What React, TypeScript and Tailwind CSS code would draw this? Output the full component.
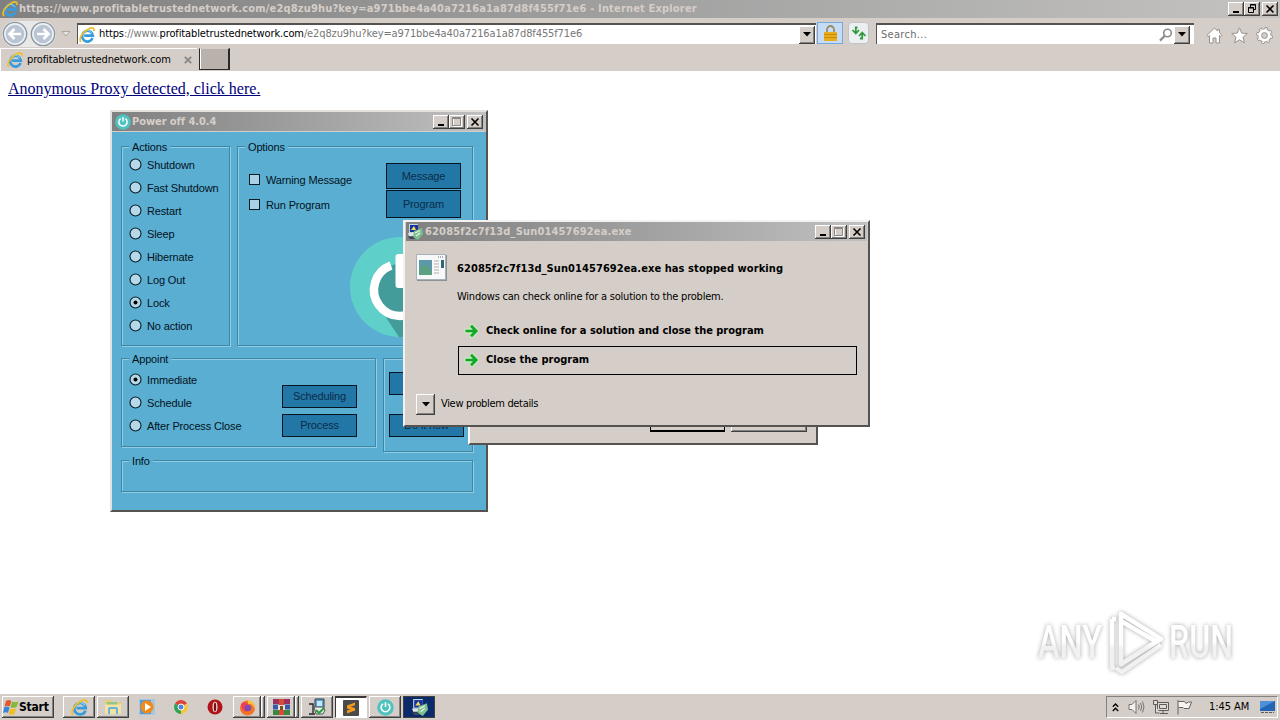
import type { ReactNode } from 'react';
import { clsx } from 'clsx';

const tahoma = "font-['DejaVu_Sans_Condensed','DejaVu_Sans',sans-serif] [font-stretch:condensed]";
const sans = "font-['Liberation_Sans',Arial,sans-serif]";
const raised =
  'bg-[#d5cec8] shadow-[inset_-1px_-1px_0_#404040,inset_1px_1px_0_#fff,inset_-2px_-2px_0_#848280]';

const actions = ['Shutdown', 'Fast Shutdown', 'Restart', 'Sleep', 'Hibernate', 'Log Out', 'Lock', 'No action'];
const appointments = ['Immediate', 'Schedule', 'After Process Close'];

/* ---------- icons ---------- */

function IeIcon({ size = 16 }: { size?: number }) {
  return (
    <svg width={size} height={size} viewBox="0 0 16 16" className="shrink-0">
      <path d="M13.6 11A5.4 5.4 0 1 1 13.9 8.600H5.2" fill="none" stroke="#3a9bdc" strokeWidth="2.6" />
      <path d="M13 6.2A5 5 0 0 0 4 6.2" fill="none" stroke="#8fd3f4" strokeWidth="1" />
      <path d="M2 15C-1 12 3.600 4.800 9.4 2c3.800-1.900 6.300-1.300 5.300 2" fill="none" stroke="#edc02a" strokeWidth="1.7" />
    </svg>
  );
}

function PowerIcon({ size = 16 }: { size?: number }) {
  return (
    <svg width={size} height={size} viewBox="0 0 16 16" className="shrink-0">
      <circle cx="8" cy="8" r="7.8" fill="#4fc3bf" />
      <path d="M5.6 4.6a4.1 4.1 0 1 0 4.8 0M8 3v4.6" fill="none" stroke="#fff" strokeWidth="1.5" />
    </svg>
  );
}

function SetupIcon({ size = 16 }: { size?: number }) {
  return (
    <svg width={size} height={size} viewBox="0 0 16 16" className="shrink-0">
      <path d="M2 0h9v9H2z" fill="#c4d2de" />
      <path d="M3 1h8v7H3z" fill="#1632a0" />
      <path d="M4 6l3-4 2 4z" fill="#f2e14c" />
      <path d="M1 9h8l-2 3H2z" fill="#e4e4e4" />
      <path d="M7 7l8-3 1 6-5 6-5-3z" fill="#7cc08d" />
      <path d="M8 9l5-2.500M9 12l4-3" stroke="#e4f3e6" strokeWidth="1.2" />
      <path d="M1 12.500h5l2 2.500H3z" fill="#394a58" />
    </svg>
  );
}

function NavArrow({ back }: { back?: boolean }) {
  return (
    <svg width="26" height="26" viewBox="0 0 26 26" className="shrink-0">
      <circle cx="13" cy="13" r="11.7" fill="#cbd5df" stroke="#8e969e" strokeWidth="1.3" />
      <circle cx="13" cy="13" r="10" fill="#b9c5d2" stroke="#eef3f8" strokeWidth="1.4" />
      <path
        d={back ? 'M19 13H8M12.5 8l-5 5 5 5' : 'M7 13h11M13.5 8l5 5-5 5'}
        fill="none"
        stroke="#fff"
        strokeWidth="2.7"
      />
    </svg>
  );
}

function GreenArrow() {
  return (
    <svg width="16" height="16" viewBox="0 0 16 16" className="shrink-0">
      <path d="M.5 5.500H6V1h3l6 7-6 7H6v-4.500H.5z" fill="#c3ecbf" />
      <path d="M1.500 8h10M7 2.800L12.200 8 7 13.200" fill="none" stroke="#12a826" strokeWidth="2.700" />
    </svg>
  );
}

function DownButton({ className }: { className: string }) {
  return (
    <span className={clsx('flex shrink-0 items-center justify-center', raised, className)}>
      <svg width="8" height="5" viewBox="0 0 8 5">
        <path d="M0 0h8L4 4.6z" fill="#000" />
      </svg>
    </span>
  );
}

function WindowButtons({ restore }: { restore?: boolean }) {
  const box = clsx('flex h-[14px] w-4 items-center justify-center', raised);
  return (
    <div className="flex shrink-0">
      <span className={box}>
        <svg width="12" height="10" viewBox="0 0 12 10">
          <path d="M3 7h6v2H3z" />
        </svg>
      </span>
      <span className={box}>
        {restore ? (
          <svg width="12" height="10" viewBox="0 0 12 10" fill="none" stroke="#000">
            <path d="M4.5 4V.5h5v5H8M4 1h6M2.5 3.5h5v5h-5zM2 4h6" />
          </svg>
        ) : (
          <svg width="12" height="10" viewBox="0 0 12 10" fill="none">
            <path d="M2.5 1.5h8v8h-8z" stroke="#fff" />
            <path d="M1.5.5h8v8h-8zM1 1.5h9" stroke="#8b8782" />
          </svg>
        )}
      </span>
      <span className={clsx('ml-[2px]', box)}>
        <svg width="12" height="10" viewBox="0 0 12 10">
          <path d="M2.5 1.5l7 7M9.5 1.5l-7 7" stroke="#000" strokeWidth="1.6" />
        </svg>
      </span>
    </div>
  );
}

/* ---------- browser ---------- */

function Browser() {
  return (
    <div className="bg-[#d5cec8]">
      <div className="flex h-[18px] items-center bg-linear-to-r from-[#808080] to-[#c4c3c2] pr-[2px] pl-[2px]">
        <IeIcon />
        <span className={clsx('ml-px pt-px text-[11px] font-bold tracking-[0.17px] whitespace-nowrap text-[#d5cec8]', tahoma)}>
          https://www.profitabletrustednetwork.com/e2q8zu9hu?key=a971bbe4a40a7216a1a87d8f455f71e6 - Internet Explorer
        </span>
        <div className="ml-auto">
          <WindowButtons restore />
        </div>
      </div>

      <div className="flex h-[30px] items-start pt-1">
        <div className="-mt-px ml-[2px] flex h-[26px] gap-[2px] rounded-full bg-[#e8e8e9]">
          <NavArrow back />
          <NavArrow />
        </div>
        <svg width="10" height="6" viewBox="0 0 10 6" className="mt-[9px] ml-[5px] shrink-0">
          <path d="M1 .5h8l-4 4.5z" fill="#e7e3df" stroke="#aba6a1" />
        </svg>
        <div className="mt-px ml-[6px] flex h-[21px] w-[739px] items-center border-t-2 border-l border-t-[#55524f] border-l-[#55524f] bg-white pr-[1px] pl-px">
          <IeIcon />
          <span className={clsx('ml-1 text-[11px] tracking-[-0.115px] whitespace-nowrap text-[#777]', tahoma)}>
            <span className="text-black">https</span>://www.
            <span className="text-black">profitabletrustednetwork.com</span>
            /e2q8zu9hu?key=a971bbe4a40a7216a1a87d8f455f71e6
          </span>
          <DownButton className="ml-auto h-[18px] w-4" />
        </div>
        <div className="ml-px flex h-[22px] w-[26px] items-center justify-center border border-[#79a9dc] bg-[#c5dcf6]">
          <svg width="15" height="16" viewBox="0 0 15 16">
            <path d="M4 8V4.5a3.5 3.5 0 0 1 7 0V8" fill="none" stroke="#9b8a5e" strokeWidth="1.8" />
            <path d="M1 7h13v9H1z" fill="#e9ac1d" />
            <path d="M1 9.5h13M1 12.5h13" stroke="#c98806" />
          </svg>
        </div>
        <div className="ml-[5px] flex h-[22px] w-[21px] items-center justify-center rounded-sm border border-[#c0c4c8] bg-[#eceff1]">
          <svg width="16" height="14" viewBox="0 0 16 14" className="shrink-0" fill="none" stroke="#2f9a3c" strokeWidth="1.800">
            <path d="M6.500 1.500H4.800v5.500M1.500 4L4.800 7.500 8 4" />
            <path d="M9 12.500h2.200V7M8 10l3.200-3.500L14.500 10" />
          </svg>
        </div>
        <div className="mt-px ml-[7px] flex h-[21px] w-[318px] items-center border-t-2 border-l border-t-[#55524f] border-l-[#55524f] bg-white pr-1 pl-1">
          <span className={clsx('pt-px text-[11px] tracking-[0.3px] text-[#6d6d6d]', tahoma)}>Search...</span>
          <svg width="14" height="14" viewBox="0 0 14 14" className="ml-auto" fill="none" stroke="#8b8b8b">
            <circle cx="8.5" cy="5" r="3.8" strokeWidth="1.6" />
            <path d="M5.8 7.8L1 12.6" strokeWidth="2.2" />
          </svg>
          <DownButton className="ml-px h-[18px] w-4" />
        </div>
        <div className="mt-[5px] ml-[12px] flex gap-2 [&>svg]:shrink-0">
          <svg width="17" height="17" viewBox="0 0 17 17" fill="#fff" stroke="#969290">
            <path d="M8.5 1L1 8.3l1.2 1.3L3.5 8.5V16H7v-5h3v5h3.5V8.5l1.3 1.1L16 8.3l-2.5-2.4V2.5h-2V4z" />
          </svg>
          <svg width="17" height="17" viewBox="0 0 17 17" fill="#fff" stroke="#969290">
            <path d="M8.5.8l2.2 5.3 5.6.4-4.3 3.7 1.4 5.6-4.9-3-4.9 3L5 10.200.7 6.500l5.6-.4z" />
          </svg>
          <svg width="17" height="17" viewBox="0 0 17 17">
            <circle cx="8.5" cy="8.5" r="6.9" fill="none" stroke="#969290" strokeWidth="3" strokeDasharray="2.9 2.52" />
            <circle cx="8.5" cy="8.500" r="5.2" fill="none" stroke="#969290" strokeWidth="3.6" />
            <circle cx="8.5" cy="8.5" r="6.7" fill="none" stroke="#fff" strokeWidth="1.8" strokeDasharray="1.7 3.56" strokeDashoffset="-.5" />
            <circle cx="8.5" cy="8.5" r="4.7" fill="none" stroke="#fff" strokeWidth="2.9" />
            <circle cx="8.5" cy="8.5" r="2.8" fill="#d5cec8" stroke="#969290" strokeWidth=".8" />
          </svg>
        </div>
      </div>

      <div className="flex h-[23px]">
        <div className="flex w-[197px] items-center border-t border-l border-white pl-[6px]">
          <IeIcon />
          <span className={clsx('ml-1 pt-px text-[11px] tracking-[-0.14px] whitespace-nowrap text-black', tahoma)}>
            profitabletrustednetwork.com
          </span>
          <svg width="8" height="8" viewBox="0 0 8 8" className="mr-[5px] ml-auto">
            <path d="M.8.8l6.400 6.400M7.200.8L.8 7.200" stroke="#8c8785" strokeWidth="1.900" />
          </svg>
        </div>
        <div className="ml-[2px] h-[22px] w-[31px] border border-t-[#d5cec8] border-r-2 border-[#2b2928] bg-[#b9b1ac] shadow-[inset_1px_0_0_#fff]" />
      </div>
    </div>
  );
}

/* ---------- power off window ---------- */

function Group({ title, className, children }: { title?: string; className: string; children?: ReactNode }) {
  return (
    <div
      className={clsx(
        'relative border border-[#3f86a7] shadow-[inset_1px_1px_0_#8fcde4,1px_1px_0_#8fcde4]',
        className,
      )}
    >
      {title && (
        <span className="absolute -top-2 left-[7px] bg-[#5aaed2] px-[3px] leading-4">{title}</span>
      )}
      {children}
    </div>
  );
}

function Radio({ label, checked }: { label: string; checked: boolean }) {
  return (
    <div className="flex h-[23px] items-center gap-[5px] whitespace-nowrap">
      <svg width="13" height="13" viewBox="0 0 13 13" className="mb-px">
        <circle cx="6.500" cy="6.500" r="5.500" fill="#b5d9e8" stroke="#0c1c26" strokeWidth="1.100" />
        {checked && <circle cx="6.500" cy="6.500" r="2" fill="#000" />}
      </svg>
      <span className="pt-px">{label}</span>
    </div>
  );
}

function Check({ label }: { label: string }) {
  return (
    <div className="flex h-[25px] items-center gap-[6px] whitespace-nowrap">
      <span className="size-[11px] border border-[#0c1c26] bg-[#a9d3e5]" />
      <span className="pt-px">{label}</span>
    </div>
  );
}

function BlueButton({ label, className }: { label?: string; className: string }) {
  return (
    <div
      className={clsx(
        'flex w-[75px] shrink-0 items-center justify-center border border-[#06141f] bg-[#2377a6] whitespace-nowrap text-[#0a2c49]',
        className,
      )}
    >
      {label}
    </div>
  );
}

function PowerWindow() {
  return (
    <div className="absolute top-[110px] left-[110px] h-[402px] w-[378px] border-2 border-t-[#e4e0dc] border-r-[#55524f] border-b-[#55524f] border-l-[#e4e0dc] bg-[#5aaed2]">
      <div className="flex h-5 items-center border-b border-[#d5cec8] bg-linear-to-r from-[#808080] to-[#c0c0c0] pr-[3px] pl-[3px]">
        <PowerIcon />
        <span className={clsx('ml-px pt-[2px] text-[11px] font-bold tracking-[-0.07px] text-[#d5cec8]', tahoma)}>
          Power off 4.0.4
        </span>
        <div className="ml-auto">
          <WindowButtons />
        </div>
      </div>
      <div className={clsx('pt-[14px] pl-[9px] text-[11px] tracking-[-0.15px] text-[#04121c]', sans)}>
        <div className="flex gap-[7px]">
          <Group title="Actions" className="h-[200px] w-[109px] pt-[6px] pl-[7px]">
            {actions.map((a) => (
              <Radio key={a} label={a} checked={a === 'Lock'} />
            ))}
          </Group>
          <Group title="Options" className="flex h-[200px] w-[236px] flex-col">
            <div className="flex pt-[16px] pl-[11px]">
              <div className="w-[137px] pt-[4px]">
                <Check label="Warning Message" />
                <Check label="Run Program" />
              </div>
              <div>
                <BlueButton label="Message" className="h-[26px]" />
                <BlueButton label="Program" className="mt-px h-[28px]" />
              </div>
            </div>
            <svg width="100" height="100" viewBox="0 0 100 100" className="mt-[19px] ml-[112px] shrink-0">
              <circle cx="50" cy="50" r="50" fill="#5fcfc9" />
              <path d="M31 73l18 27a50 50 0 0 0 51-50L72 30z" fill="#449c9a" />
              <circle cx="50" cy="53" r="26" fill="#449c9a" />
              <path d="M41 28.600a26 26 0 1 0 18 0" fill="none" stroke="#fff" strokeWidth="8.500" />
              <rect x="45.500" y="17" width="10" height="34" rx="3" fill="#fff" />
            </svg>
          </Group>
        </div>
        <div className="mt-[12px] flex h-[94px] gap-[7px]">
          <Group title="Appoint" className="flex h-[89px] w-[255px] pt-[9px] pl-[7px]">
            <div className="w-[153px]">
              {appointments.map((a) => (
                <Radio key={a} label={a} checked={a === 'Immediate'} />
              ))}
            </div>
            <div className="pt-[17px]">
              <BlueButton label="Scheduling" className="h-[23px]" />
              <BlueButton label="Process" className="mt-[6px] h-[23px]" />
            </div>
          </Group>
          <Group className="h-[94px] w-[90px] pt-[13px] pl-[5px]">
            <BlueButton className="h-[23px]" />
            <BlueButton label="Do it now" className="mt-[19px] h-[23px]" />
          </Group>
        </div>
        <Group title="Info" className="mt-[8px] h-[32px] w-[352px]" />
      </div>
    </div>
  );
}

/* ---------- error dialog ---------- */

function BackDialog() {
  return (
    <div className="absolute top-[300px] left-[468px] flex h-[145px] w-[350px] items-end border-2 border-t-white border-r-[#55524f] border-b-[#55524f] border-l-white bg-[#d5cec8] pb-[11px] pl-[180px]">
      <span className="h-[22px] w-[75px] border border-b-2 border-black bg-[#d5cec8]" />
      <span className={clsx('ml-[6px] h-[22px] w-[76px]', raised)} />
    </div>
  );
}

function ErrorDialog() {
  return (
    <div
      className={clsx(
        'absolute top-[220px] left-[403px] h-[207px] w-[467px] border-2 border-t-[#f4f2f0] border-r-[#55524f] border-b-[#55524f] border-l-[#f4f2f0] bg-[#d5cec8] text-[11px] text-black',
        tahoma,
      )}
    >
      <div className="mx-px flex h-[19px] items-center bg-linear-to-r from-[#808080] to-[#c0c0c0] pr-[2px] pl-px">
        <SetupIcon />
        <span className="ml-[2px] pt-[2px] font-bold tracking-[0.16px] text-[#d5cec8]">
          62085f2c7f13d_Sun01457692ea.exe
        </span>
        <div className="ml-auto">
          <WindowButtons />
        </div>
      </div>
      <div className="flex pt-[13px] pl-[11px]">
        <svg width="32" height="28" viewBox="0 0 32 28" className="shrink-0">
          <path d="M1 1h30v26H1z" fill="#8d9299" />
          <path d="M.5.500h29v25h-29z" fill="#f6f8fa" stroke="#a9b0b8" />
          <path d="M3 6h13v15H3z" fill="#5d98a8" />
          <path d="M3 15l6-5 7 8v3H3z" fill="#5da182" />
          <path d="M18 7h5M18 10h5M18 13h5M18 16h5M18 19h5" stroke="#b5adb0" />
          <path d="M25 6h3v8h-3z" fill="#2f6672" />
          <path d="M22 3h6" stroke="#5a6a7a" strokeDasharray="1 1" />
        </svg>
        <div className="ml-[9px] w-[400px] pt-[7px] whitespace-nowrap">
          <p className="font-bold leading-4 tracking-[0.08px]">62085f2c7f13d_Sun01457692ea.exe has stopped working</p>
          <p className="mt-[12px] leading-4 tracking-[-0.22px]">Windows can check online for a solution to the problem.</p>
          <div className="mt-[11px] flex h-[29px] items-center gap-[6px] pl-[7px] font-bold tracking-[-0.02px]">
            <GreenArrow />
            <span className="pt-px">Check online for a solution and close the program</span>
          </div>
          <div className="mt-px ml-px flex h-[29px] items-center gap-[6px] border border-black pb-[2px] pl-[5px] font-bold">
            <GreenArrow />
            <span className="pt-px">Close the program</span>
          </div>
        </div>
      </div>
      <div className="mt-[19px] ml-[11px] flex">
        <DownButton className="h-[21px] w-[19px]" />
        <span className="ml-[6px] pt-px leading-[18px] tracking-[-0.33px]">View problem details</span>
      </div>
    </div>
  );
}

/* ---------- watermark ---------- */

function Watermark() {
  return (
    <svg
      width="220"
      height="76"
      viewBox="-10 -5 220 76"
      className="absolute top-[602px] left-[1026px] font-['Roboto',sans-serif] drop-shadow-[0_0_2px_#a8a8a8]"
    >
      <defs>
        <linearGradient id="mark" x1="0" y1="0" x2="0" y2="1">
          <stop offset=".5" stopColor="#fff" />
          <stop offset=".6" stopColor="#f1f1f1" />
        </linearGradient>
      </defs>
      <text x="2" y="51" fontSize="47" fontWeight="500" textLength="64" lengthAdjust="spacingAndGlyphs" fill="url(#mark)">ANY</text>
      <text x="133" y="51" fontSize="47" fontWeight="500" textLength="64" lengthAdjust="spacingAndGlyphs" fill="url(#mark)">RUN</text>
      <path
        d="M85 7L125 32 85 57zM76 12v49l3-1M80 12h-4M85 14l36 21M80 61l6 4 39-27"
        fill="none"
        stroke="url(#mark)"
        strokeWidth="4.500"
        strokeLinejoin="round"
      />
    </svg>
  );
}

/* ---------- taskbar ---------- */

function TaskButton({ look = raised, width = 'w-8', children }: { look?: string; width?: string; children: ReactNode }) {
  return (
    <span className={clsx('flex h-[22px] shrink-0 items-center justify-center', width, look)}>
      {children}
    </span>
  );
}

function Taskbar() {
  return (
    <div className={clsx('flex h-[27px] items-start border-t border-white bg-[#d5cec8] pt-[2px] text-[11px] text-black', tahoma)}>
      <div className={clsx('ml-[2px] flex h-[22px] w-[52px] items-center pl-px text-[12px] font-bold tracking-[-0.2px]', raised)}>
        <svg width="16" height="16" viewBox="0 0 16 16" className="shrink-0">
          <path d="M3 2q2.500-2 5.300 0L6.800 7.500Q4 6 1.500 7.500z" fill="#e4572a" />
          <path d="M9 2.500q3 1.500 6.500 0L13.500 8q-3 1.500-5.900.2z" fill="#84b83a" />
          <path d="M1.200 8.500q2.500-2 5.300 0L5 14q-2.500-1.500-5 0z" fill="#3a86d4" />
          <path d="M7.300 9.200q3 1.500 6 0L11.500 15q-2.500 1.500-5.700.2z" fill="#f0bd28" />
        </svg>
        Start
      </div>
      <div className="ml-[9px] flex gap-[2px]">
        <TaskButton><IeIcon size={17} /></TaskButton>
        <TaskButton>
          <svg width="18" height="16" viewBox="0 0 18 16">
            <path d="M1 1h6l1 2h9v12H1z" fill="#e8ce76" />
            <path d="M3 3h10v4H3z" fill="#8ec884" />
            <path d="M1 5.500h16V15H1z" fill="#f4e3a2" />
            <path d="M5 15v-5q0-1 1-1h6q1 0 1 1v5" fill="none" stroke="#68b2dc" strokeWidth="2" />
          </svg>
        </TaskButton>
        <TaskButton look="">
          <svg width="16" height="16" viewBox="0 0 16 16">
            <path d="M0 0h16v16H0z" fill="#aac6de" />
            <path d="M1 1h11v14H1z" fill="#5c9bd0" />
            <circle cx="8" cy="8" r="6.500" fill="#f18a19" />
            <path d="M6 4l6 4-6 4z" fill="#fff" />
          </svg>
        </TaskButton>
        <TaskButton look="">
          <svg width="14" height="14" viewBox="0 0 14 14">
            <path d="M7 7L1 3.500a7 7 0 0 1 12 0z" fill="#db4437" />
            <path d="M7 7v7A7 7 0 0 1 1 3.500z" fill="#33a156" />
            <path d="M7 7l6-3.500A7 7 0 0 1 7 14z" fill="#f6c73c" />
            <circle cx="7" cy="7" r="3" fill="#4a86e0" stroke="#fff" />
          </svg>
        </TaskButton>
        <TaskButton look="">
          <svg width="16" height="16" viewBox="0 0 16 16">
            <circle cx="8" cy="8" r="7.500" fill="#b01318" />
            <ellipse cx="8" cy="8" rx="2.500" ry="5.200" fill="#e8dcda" />
            <ellipse cx="8" cy="8" rx="1.200" ry="4.500" fill="#7d0c10" />
          </svg>
        </TaskButton>
        <div className="flex">
          <TaskButton width="w-7">
            <svg width="17" height="17" viewBox="0 0 17 17">
              <circle cx="8.500" cy="9" r="7.500" fill="#f27424" />
              <path d="M9 1q7 2 7 9-3-6-7-5z" fill="#fcc531" />
              <path d="M2 5q3-3 6-1l3 4-4 5q-5-2-5-8z" fill="#ee3e5c" />
              <circle cx="9" cy="9" r="3.200" fill="#8148b8" />
            </svg>
          </TaskButton>
          <span className={clsx('h-[22px] w-1', raised)} />
        </div>
        <div className="flex">
          <TaskButton width="w-7">
            <svg width="17" height="16" viewBox="0 0 17 16">
              <path d="M0 0h17v5H0z" fill="#9c2e62" />
              <path d="M0 5.500h17v5H0z" fill="#3959a8" />
              <path d="M0 11h17v5H0z" fill="#3a873e" />
              <path d="M6 0h5v16H6z" fill="#d64b32" />
              <path d="M5 6h7v5H5z" fill="#e8dfd0" />
              <path d="M7 7h3v4H7z" fill="#784c30" />
            </svg>
          </TaskButton>
          <span className={clsx('h-[22px] w-1', raised)} />
        </div>
        <TaskButton>
          <svg width="18" height="18" viewBox="0 0 18 18" fill="none">
            <path d="M7 1h9v9H7z" fill="#58a4d8" stroke="#3c3c3c" />
            <path d="M9 3h5v5H9z" fill="#c5e8fa" />
            <path d="M1 6h4v9M1 16h6" stroke="#222" strokeWidth="1.300" />
            <path d="M6 9h9l2 3-2 4H8z" fill="#e9ecec" stroke="#555" />
            <path d="M8 12l3 3 5-5" stroke="#2b9d3c" strokeWidth="2" />
          </svg>
        </TaskButton>
        <TaskButton look="border border-t-2 border-[#3c3a38] border-r-white border-b-white bg-white">
          <svg width="16" height="16" viewBox="0 0 16 16">
            <rect width="16" height="16" rx="1" fill="#4a4a4a" />
            <path d="M12 2.500L4 5.500v3l8 2.500V8L7.500 6.700l4.500-1.500zM4 10.500V13.500l8-3V8z" fill="#f59a1c" />
          </svg>
        </TaskButton>
        <TaskButton><PowerIcon size={17} /></TaskButton>
        <TaskButton look="border border-[#404040] bg-[#0a2a6c]"><SetupIcon size={17} /></TaskButton>
      </div>

      <div className="mr-[2px] ml-auto flex h-[22px] w-[172px] items-center border border-t-[#848280] border-r-white border-b-white border-l-[#848280] pl-[5px]">
        <svg width="7" height="9" viewBox="0 0 7 9" fill="none" stroke="#000" strokeWidth="1.300">
          <path d="M.8 3.800L3.500 1l2.700 2.800M.8 8L3.500 5.200 6.200 8" />
        </svg>
        <svg width="17" height="16" viewBox="0 0 17 16" className="ml-[9px]" fill="#f3f1ef" stroke="#77736f">
          <path d="M1 5.500h3l4-4v13l-4-4H1z" />
          <path d="M10.500 5.500q1.500 2.500 0 5M12.500 4q2.500 4 0 8M14.500 2.500q3 5.500 0 11" fill="none" />
        </svg>
        <svg width="17" height="16" viewBox="0 0 17 16" className="ml-[7px]" fill="#dfdcd8" stroke="#5e5b58">
          <path d="M5.500 3.500h11v8h-11zM7.500 5.500h7v4h-7zM8 14.500h8M11 12v2" />
          <path d="M1.500 1.500h4v4h-4zM3.500 6v8h4" />
        </svg>
        <svg width="17" height="16" viewBox="0 0 17 16" className="ml-[7px]" fill="#f7f5f3" stroke="#66625f">
          <path d="M2 1v14.500M2.500 2.500h6l1.500 2q2-2 5.500-1.500L13 9.500H8l-1-1H2.500" />
        </svg>
        <span className="ml-4 pt-px tracking-[-0.05px] whitespace-nowrap">1:45 AM</span>
        <svg width="15" height="14" viewBox="0 0 15 14" className="mr-[2px] ml-auto">
          <path d="M0 1h15v10H0z" fill="#2464b4" />
          <path d="M0 1h15L0 9z" fill="#4d92d8" />
          <path d="M1 12.500h13" stroke="#5c5c5c" strokeDasharray="3 1" />
        </svg>
      </div>
    </div>
  );
}

export default function App() {
  return (
    <div className="relative flex h-[720px] w-[1280px] flex-col overflow-hidden bg-white">
      <Browser />
      <main className="flex-1 pt-[5px] pl-2">
        <a className="font-['Liberation_Serif',serif] text-[16px] leading-5 text-[#00007b] underline">
          Anonymous Proxy detected, click here.
        </a>
      </main>
      <Taskbar />
      <PowerWindow />
      <BackDialog />
      <ErrorDialog />
      <Watermark />
    </div>
  );
}
